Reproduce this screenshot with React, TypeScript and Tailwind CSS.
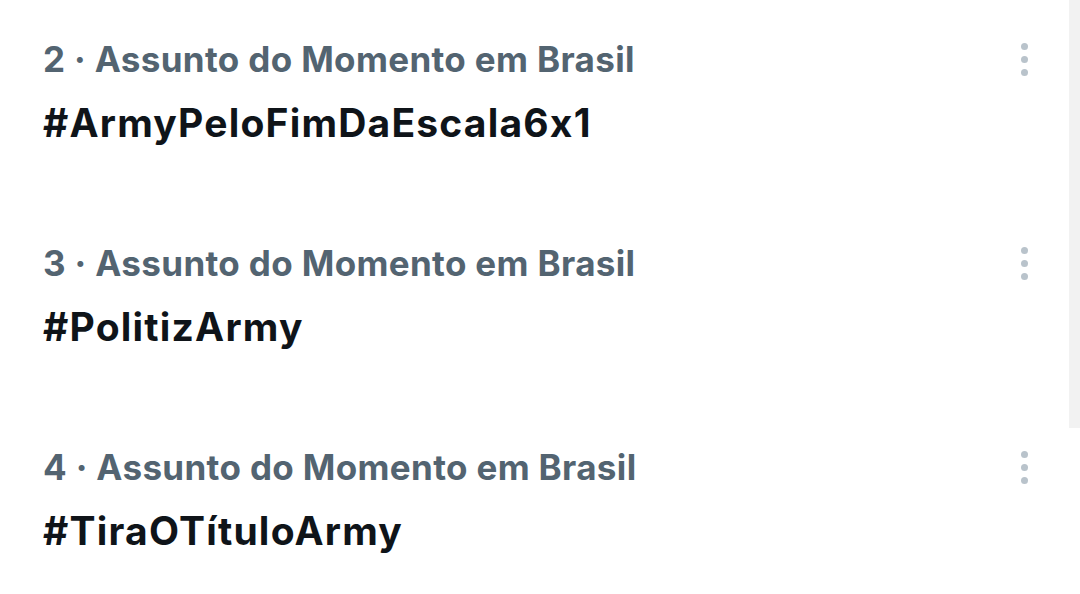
const trends = [
  { rank: 2, tag: "#ArmyPeloFimDaEscala6x1" },
  { rank: 3, tag: "#PolitizArmy" },
  { rank: 4, tag: "#TiraOTítuloArmy" },
];

function MoreDots() {
  return (
    <div className="flex flex-col items-center gap-[6px]">
      <span className="block h-[7px] w-[7px] rounded-full bg-[#b9c3cb]" />
      <span className="block h-[7px] w-[7px] rounded-full bg-[#b9c3cb]" />
      <span className="block h-[7px] w-[7px] rounded-full bg-[#b9c3cb]" />
    </div>
  );
}

export default function App() {
  return (
    <div
      className="relative h-[594px] w-[1080px] overflow-hidden bg-white"
      style={{ fontFamily: "Inter, 'Noto Sans', sans-serif", fontFeatureSettings: "'calt' 0" }}
    >
      <div className="flex flex-col">
        {trends.map((t) => (
          <div key={t.rank} className="flex h-[204px] flex-col pl-[43px] pr-[52px] pt-[39px]">
            <div className="flex h-[40px] items-center justify-between">
              <span className="text-[35px] font-bold leading-[40px] tracking-[0.35px] text-[#536471]">
                {t.rank} · Assunto do Momento em Brasil
              </span>
              <MoreDots />
            </div>
            <div className="mt-[22px] h-[44px] text-[39px] font-bold leading-[44px] tracking-[1.2px] text-[#0f1419]">
              {t.tag}
            </div>
          </div>
        ))}
      </div>
      <div className="absolute right-0 top-0 h-[428px] w-[11px] bg-[#f2f2f2]" />
    </div>
  );
}
